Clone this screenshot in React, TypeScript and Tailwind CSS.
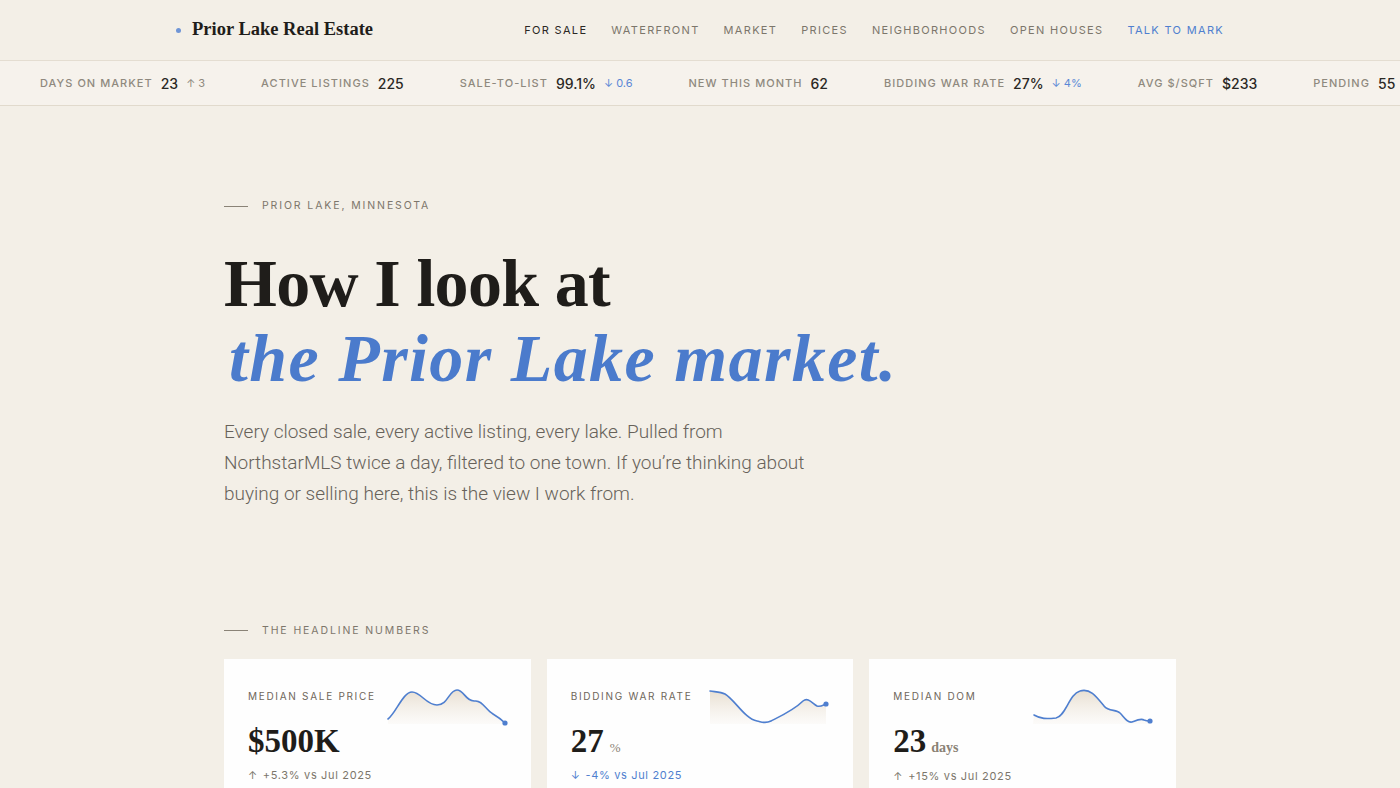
import React from "react";

const sans = "font-['Inter','Roboto','Liberation_Sans',sans-serif]";
const serif = "font-['Liberation_Serif','DejaVu_Serif',serif]";

const navItems = [
  { label: "For Sale", tone: "text-[#2a2824]" },
  { label: "Waterfront", tone: "text-[#7c766b]" },
  { label: "Market", tone: "text-[#7c766b]" },
  { label: "Prices", tone: "text-[#7c766b]" },
  { label: "Neighborhoods", tone: "text-[#7c766b]" },
  { label: "Open Houses", tone: "text-[#7c766b]" },
  { label: "Talk to Mark", tone: "text-[#4f7fcf]" },
];

type Tick = { label: string; value: string; delta?: string; dir?: "up" | "down" };

const ticks: Tick[] = [
  { label: "Days on Market", value: "23", delta: "3", dir: "up" },
  { label: "Active Listings", value: "225" },
  { label: "Sale-to-List", value: "99.1%", delta: "0.6", dir: "down" },
  { label: "New This Month", value: "62" },
  { label: "Bidding War Rate", value: "27%", delta: "4%", dir: "down" },
  { label: "Avg $/SqFt", value: "$233" },
  { label: "Pending", value: "55" },
];

function Sparkline({ d, end, id }: { d: string; end: [number, number]; id: string }) {
  return (
    <svg width="120" height="40" viewBox="0 0 120 40" className="shrink-0 overflow-visible">
      <defs>
        <linearGradient id={id} x1="0" y1="0" x2="0" y2="1">
          <stop offset="0%" stopColor="#e6dccd" stopOpacity="0.9" />
          <stop offset="100%" stopColor="#efe8dd" stopOpacity="0.15" />
        </linearGradient>
      </defs>
      <path d={`${d} L${end[0]},38 L1,38 Z`} fill={`url(#${id})`} />
      <path d={d} fill="none" stroke="#4f7fcf" strokeWidth="1.6" strokeLinecap="round" strokeLinejoin="round" />
      <circle cx={end[0]} cy={end[1]} r="2.6" fill="#4f7fcf" />
    </svg>
  );
}

type Card = {
  label: string;
  value: string;
  unit?: string;
  unitSerif?: boolean;
  delta: string;
  dir: "up" | "down";
  d: string;
  end: [number, number];
};

const cards: Card[] = [
  {
    label: "Median Sale Price",
    value: "$500K",
    delta: "+5.3% vs Jul 2025",
    dir: "up",
    d: "M1,33 C9,27 16,6 25,6 C34,6 39,19 50,19 C61,19 62,4 70,4 C77,4 79,16 88,15 C95,14 99,24 106,28 C111,31 115,34 118,37",
    end: [118, 37],
  },
  {
    label: "Bidding War Rate",
    value: "27",
    unit: "%",
    delta: "-4% vs Jul 2025",
    dir: "down",
    d: "M1,5 C8,6 12,6 16,8 C26,14 36,33 48,35 C53,36 56,38 62,35 C72,30 85,24 94,15 C99,11 103,17 108,20 C112,21 114,19 117,18",
    end: [117, 18],
  },
  {
    label: "Median DOM",
    value: "23",
    unit: "days",
    unitSerif: true,
    delta: "+15% vs Jul 2025",
    dir: "up",
    d: "M2,29 C9,33 14,33 24,32 C34,30 37,8 48,5 C58,2 64,10 72,20 C77,26 84,23 88,27 C92,31 95,37 100,36 C105,34 109,32 112,34 C114,35 116,35 118,35",
    end: [118, 35],
  },
];

function Arrow({ dir }: { dir: "up" | "down" }) {
  return <span className="mr-[5px]">{dir === "up" ? "↑" : "↓"}</span>;
}

export default function App() {
  return (
    <div className={`min-h-screen bg-[#f3efe7] ${sans} text-[#2a2824]`}>
      {/* Top navigation */}
      <header className="h-[61px] border-b border-[#e4ddd1]">
        <div className="mx-auto flex h-full max-w-[1048px] items-center justify-between">
          <div className="flex items-center gap-[11px]">
            <span className="h-[5px] w-[5px] rounded-full bg-[#6f95d6]" />
            <span className={`${serif} text-[18.5px] font-bold text-[#1f1d1a]`}>Prior Lake Real Estate</span>
          </div>
          <nav className="flex items-center gap-[24px] pt-[1px]">
            {navItems.map((n) => (
              <a key={n.label} className={`text-[11px] uppercase tracking-[0.12em] ${n.tone}`}>
                {n.label}
              </a>
            ))}
          </nav>
        </div>
      </header>

      {/* Market ticker */}
      <div className="h-[45px] overflow-hidden border-b border-[#e1dacd] bg-[#f6f2ec]">
        <div className="flex h-full items-center gap-[56px] whitespace-nowrap pl-[40px]">
          {ticks.map((t) => (
            <div key={t.label} className="flex items-center gap-[8px]">
              <span className="text-[11px] font-medium uppercase tracking-[0.094em] text-[#8f897e]">{t.label}</span>
              <span className="text-[14px] font-medium text-[#2a2824]">{t.value}</span>
              {t.delta && (
                <span className={`text-[11px] ${t.dir === "up" ? "text-[#8f897e]" : "text-[#5a88d6]"}`}>
                  <span className="mr-[3px]">{t.dir === "up" ? "↑" : "↓"}</span>
                  {t.delta}
                </span>
              )}
            </div>
          ))}
        </div>
      </div>

      {/* Intro */}
      <main className="mx-auto max-w-[952px] pt-[92px]">
        <div className="flex items-center gap-[14px]">
          <span className="h-px w-[24px] bg-[#8a8377]" />
          <span className="text-[10.5px] uppercase leading-4 tracking-[0.18em] text-[#7d766b]">
            Prior Lake, Minnesota
          </span>
        </div>

        <h1 className={`${serif} mt-[32px] text-[68px] font-bold leading-[1.1] tracking-[-0.01em] text-[#1f1d1a]`}>
          How I look at
          <br />
          <em className="pl-[5px] tracking-[0.02em] text-[#4b7bcc]">the Prior Lake market.</em>
        </h1>

        <p className="mt-[20px] max-w-[600px] font-['Roboto','Inter',sans-serif] text-[19px] font-light leading-[31px] text-[#67625a]">
          Every closed sale, every active listing, every lake. Pulled from NorthstarMLS twice a day, filtered to one
          town. If you’re thinking about buying or selling here, this is the view I work from.
        </p>

        {/* Headline numbers */}
        <div className="mt-[114px] flex items-center gap-[14px]">
          <span className="h-px w-[24px] bg-[#8a8377]" />
          <span className="text-[10.5px] uppercase leading-4 tracking-[0.18em] text-[#7d766b]">
            The Headline Numbers
          </span>
        </div>

        <div className="mt-[20px] grid grid-cols-3 gap-[16px]">
          {cards.map((c, i) => (
            <div key={c.label} className="bg-[#fefefe] px-[24px] pb-[28px] pt-[27px]">
              <div className="flex items-start justify-between">
                <span className="mt-[2px] text-[10px] uppercase leading-4 tracking-[0.17em] text-[#6e665a]">
                  {c.label}
                </span>
                <Sparkline d={c.d} end={c.end} id={`spark-${i}`} />
              </div>
              <div className="-mt-[1px] flex items-baseline">
                <span className={`${serif} text-[33px] font-bold leading-8 text-[#1f1d1a]`}>{c.value}</span>
                {c.unit && (
                  <span
                    className={`${serif} ${
                      c.unitSerif ? "ml-[5px] text-[14px] font-bold" : "ml-[6px] text-[13px]"
                    } text-[#8a8275]`}
                  >
                    {c.unit}
                  </span>
                )}
              </div>
              <div
                className={`mt-[10px] text-[11px] leading-4 tracking-[0.06em] ${
                  c.dir === "up" ? "text-[#7c766b]" : "text-[#4f7fcf]"
                }`}
              >
                <Arrow dir={c.dir} />
                {c.delta}
              </div>
            </div>
          ))}
        </div>
      </main>
    </div>
  );
}
